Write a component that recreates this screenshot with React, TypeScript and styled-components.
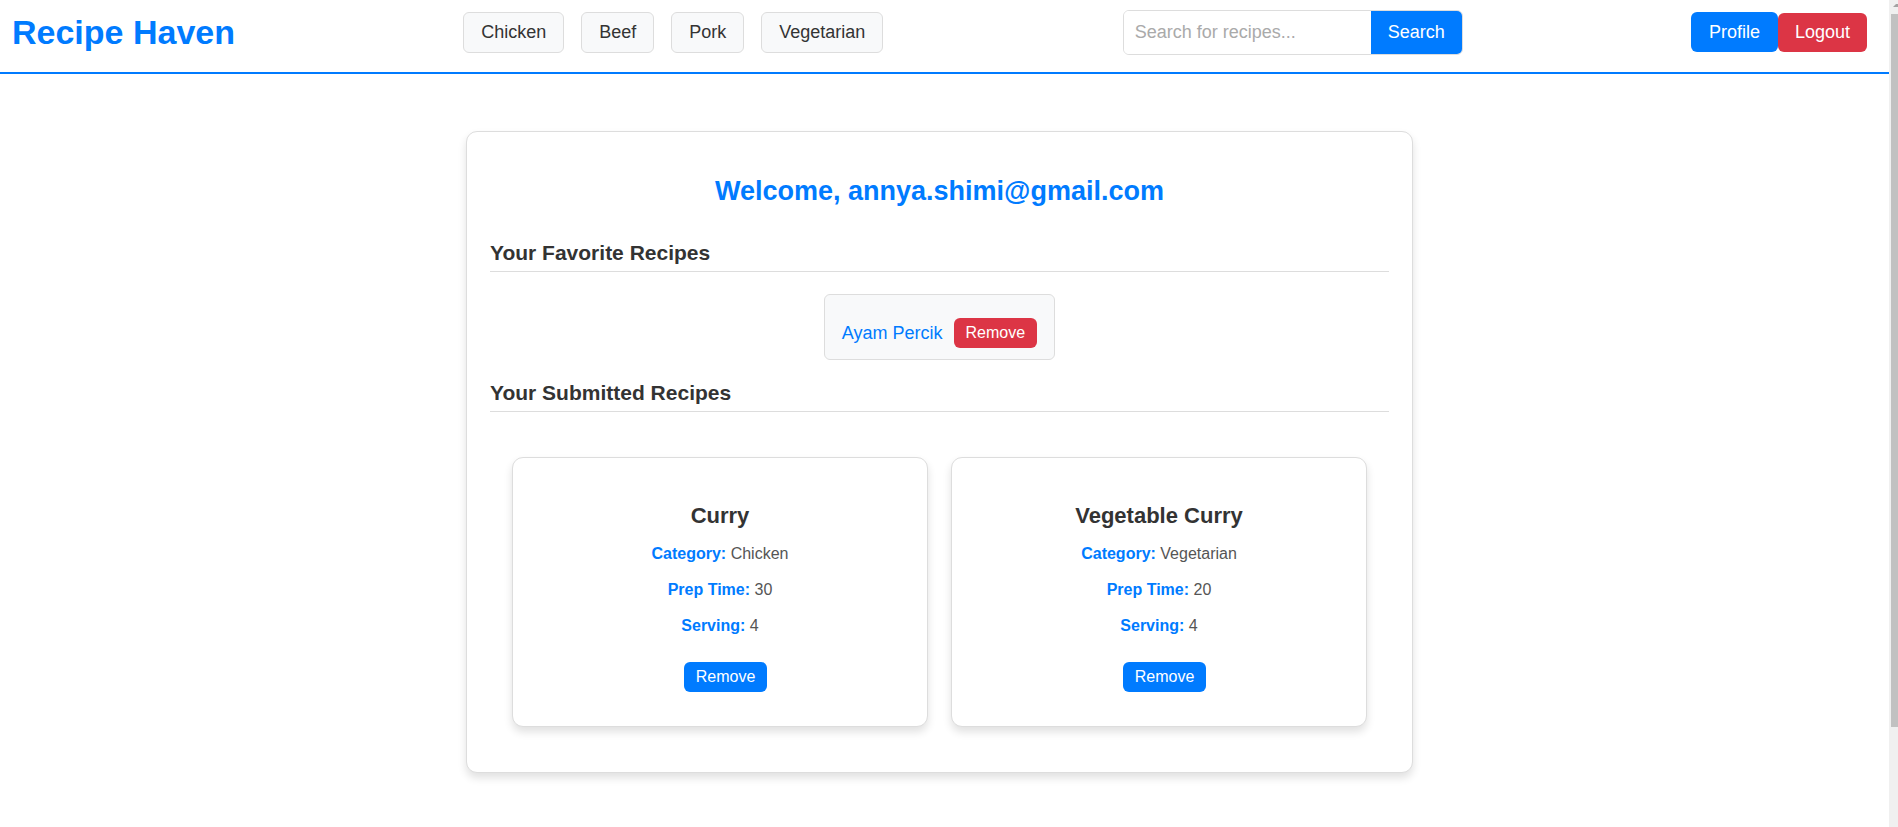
import React from "react";
import styled, { createGlobalStyle, css } from "styled-components";

const color = {
  blue: "#007bff",
  red: "#dc3545",
  line: "#dddddd",
  panel: "#f8f9fa",
  ink: "#333333",
  muted: "#555555",
};

const GlobalStyle = createGlobalStyle`
  *, *::before, *::after { box-sizing: border-box; }
  body {
    margin: 0;
    background: #ffffff;
    color: ${color.ink};
    font-family: "Liberation Sans", Arial, sans-serif;
    font-size: 16px;
  }
`;

const Page = styled.div`
  padding-right: 9px;
`;

const Header = styled.header`
  display: flex;
  align-items: center;
  justify-content: space-between;
  padding: 10px 22px 17px 12px;
  border-bottom: 2px solid ${color.blue};
`;

const Brand = styled.a`
  padding-bottom: 2px;
  color: ${color.blue};
  font-size: 34px;
  font-weight: bold;
  line-height: 42px;
  text-decoration: none;
`;

const Nav = styled.nav`
  display: flex;
  gap: 17px;
  margin-right: 11px;
`;

const NavLink = styled.a`
  padding: 9px 17px;
  border: 1px solid ${color.line};
  border-radius: 6px;
  background: ${color.panel};
  color: ${color.ink};
  font-size: 18px;
  line-height: 21px;
  text-decoration: none;
`;

const SearchForm = styled.form`
  display: flex;
  height: 45px;
  border: 1px solid ${color.line};
  border-radius: 6px;
  overflow: hidden;
`;

const SearchInput = styled.input`
  width: 247px;
  padding: 0 11px;
  border: 0;
  outline: 0;
  font: inherit;
  font-size: 18px;
  &::placeholder { color: #aaaaaa; opacity: 1; }
`;

const SearchButton = styled.button`
  padding: 0 17px;
  border: 0;
  background: ${color.blue};
  color: #ffffff;
  font: inherit;
  font-size: 18px;
`;

const Account = styled.div`
  display: flex;
  align-items: flex-end;
  padding-bottom: 2px;
`;

const accountControl = css`
  border: 0;
  border-radius: 6px;
  color: #ffffff;
  font-family: inherit;
  font-size: 18px;
  line-height: 21px;
  text-decoration: none;
`;

const ProfileLink = styled.a`
  ${accountControl}
  padding: 10px 18px 9px;
  background: ${color.blue};
`;

const LogoutButton = styled.button`
  ${accountControl}
  padding: 9px 17px;
  background: ${color.red};
`;

const Main = styled.main`
  padding: 57px 10px 54px 0;
`;

const ProfileCard = styled.section`
  max-width: 947px;
  margin: 0 auto;
  padding: 23px;
  border: 1px solid ${color.line};
  border-radius: 11px;
  background: #ffffff;
  box-shadow: 0 5px 9px rgba(0, 0, 0, 0.12);
`;

const Welcome = styled.h1`
  margin: 20px 0 34px;
  color: ${color.blue};
  font-size: 27px;
  line-height: 32px;
  text-align: center;
`;

const SectionTitle = styled.h2`
  margin: 0 0 22px;
  padding-bottom: 6px;
  border-bottom: 1px solid ${color.line};
  font-size: 21px;
  line-height: 24px;
`;

const FavoriteList = styled.ul`
  display: flex;
  flex-wrap: wrap;
  justify-content: center;
  gap: 22px;
  margin: 0 0 21px;
  padding: 0;
  list-style: none;
`;

const FavoriteItem = styled.li`
  display: flex;
  align-items: center;
  gap: 11px;
  padding: 23px 17px 11px;
  border: 1px solid ${color.line};
  border-radius: 6px;
  background: ${color.panel};
`;

const FavoriteLink = styled.a`
  color: ${color.blue};
  font-size: 18px;
  line-height: 21px;
  text-decoration: none;
`;

const RemoveButton = styled.button<{ $danger?: boolean }>`
  height: 30px;
  padding: 0 12px;
  border: 0;
  border-radius: 6px;
  background: ${(p) => (p.$danger ? color.red : color.blue)};
  color: #ffffff;
  font: inherit;
`;

const RecipeGrid = styled.div`
  display: grid;
  grid-template-columns: repeat(auto-fit, minmax(280px, 1fr));
  gap: 23px;
  padding: 23px 22px 22px;
`;

const RecipeCard = styled.article`
  display: flex;
  flex-direction: column;
  align-items: center;
  padding: 45px 23px 34px;
  border: 1px solid ${color.line};
  border-radius: 11px;
  background: #ffffff;
  box-shadow: 0 5px 9px rgba(0, 0, 0, 0.12);

  ${RemoveButton} {
    margin-left: 11px;
  }
`;

const RecipeTitle = styled.h3`
  margin: 0 0 16px;
  font-size: 22px;
  line-height: 26px;
`;

const Detail = styled.p`
  margin: 0 0 18px;
  color: ${color.muted};
  line-height: 18px;

  &:last-of-type {
    margin-bottom: 27px;
  }

  strong {
    color: ${color.blue};
  }
`;

const ScrollTrack = styled.div`
  position: fixed;
  top: 0;
  right: 0;
  bottom: 0;
  width: 9px;
  padding-left: 2px;
  overflow: hidden;
  background: #f0f0f0;
`;

const ScrollArrow = styled.svg`
  display: block;
  width: 7px;
  height: 14px;
`;

const ScrollThumb = styled.div`
  height: 713px;
  background: #c1c1c1;
`;

const categories = ["Chicken", "Beef", "Pork", "Vegetarian"];

const recipes = [
  { name: "Curry", category: "Chicken", prep: 30, serving: 4 },
  { name: "Vegetable Curry", category: "Vegetarian", prep: 20, serving: 4 },
];

export default function App() {
  return (
    <Page>
      <GlobalStyle />
      <Header>
        <Brand href="#home">Recipe Haven</Brand>
        <Nav aria-label="Categories">
          {categories.map((name) => (
            <NavLink key={name} href={`#${name.toLowerCase()}`}>
              {name}
            </NavLink>
          ))}
        </Nav>
        <SearchForm role="search" onSubmit={(e) => e.preventDefault()}>
          <SearchInput type="text" aria-label="Search for recipes" placeholder="Search for recipes..." />
          <SearchButton type="submit">Search</SearchButton>
        </SearchForm>
        <Account>
          <ProfileLink href="#profile">Profile</ProfileLink>
          <LogoutButton type="button">Logout</LogoutButton>
        </Account>
      </Header>

      <Main>
        <ProfileCard>
          <Welcome>Welcome, annya.shimi@gmail.com</Welcome>

          <SectionTitle>Your Favorite Recipes</SectionTitle>
          <FavoriteList>
            <FavoriteItem>
              <FavoriteLink href="#ayam-percik">Ayam Percik</FavoriteLink>
              <RemoveButton type="button" $danger>
                Remove
              </RemoveButton>
            </FavoriteItem>
          </FavoriteList>

          <SectionTitle>Your Submitted Recipes</SectionTitle>
          <RecipeGrid>
            {recipes.map((recipe) => (
              <RecipeCard key={recipe.name}>
                <RecipeTitle>{recipe.name}</RecipeTitle>
                <Detail>
                  <strong>Category:</strong> {recipe.category}
                </Detail>
                <Detail>
                  <strong>Prep Time:</strong> {recipe.prep}
                </Detail>
                <Detail>
                  <strong>Serving:</strong> {recipe.serving}
                </Detail>
                <RemoveButton type="button">Remove</RemoveButton>
              </RecipeCard>
            ))}
          </RecipeGrid>
        </ProfileCard>
      </Main>

      <ScrollTrack aria-hidden="true">
        <ScrollArrow viewBox="0 0 7 14">
          <path d="M2 7 L5 4 H7 V7 Z" fill="#a3a3a3" />
        </ScrollArrow>
        <ScrollThumb />
      </ScrollTrack>
    </Page>
  );
}
